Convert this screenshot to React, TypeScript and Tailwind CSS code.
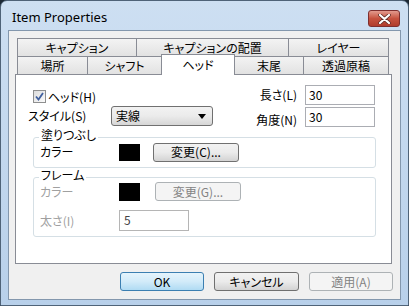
import React from 'react'

function Tab({ label, className }: { label: string; className: string }) {
    return (
        <div className={`h-full flex items-center justify-center border-t border-l border-[#898c95] bg-gradient-to-b from-[#f3f3f3] to-[#e2e2e2] ${className}`}>
            {label}
        </div>
    )
}

function WinButton({ label, className }: { label: string; className: string }) {
    return (
        <div className={`h-[19px] flex items-center justify-center rounded-[3px] border ${className}`}>
            {label}
        </div>
    )
}

export default function App() {
    return (
        <div className="w-[409px] h-[306px] bg-[#1d2935] font-['Noto_Sans_CJK_JP',sans-serif] text-[12px] leading-[12px] text-black [font-feature-settings:'palt']">
            <div className="h-full flex flex-col rounded-t-[7px] border border-[#4f6378] bg-gradient-to-b from-[#cddff2] to-[#b8d0ea]">
                {/* title bar */}
                <div className="h-[29px] flex items-start pl-[11px] pr-[8px]">
                    <span className="mt-[8px] font-['Noto_Sans',sans-serif] text-[13px] leading-[16px] text-black">
                        Item Properties
                    </span>
                    <div className="ml-auto mt-[9px] w-[32px] h-[17px] flex items-center justify-center rounded-[3px] border border-[#7e2f2f] bg-gradient-to-b from-[#e29a8e] via-[#c6523f] to-[#b03c2c]">
                        <svg width="13" height="10" viewBox="0 0 13 10">
                            <path d="M2 1 L11 9 M11 1 L2 9" stroke="#5a2a25" strokeWidth="3.6" strokeLinecap="round" />
                            <path d="M2 1 L11 9 M11 1 L2 9" stroke="#ffffff" strokeWidth="2.2" strokeLinecap="round" />
                        </svg>
                    </div>
                </div>

                {/* client area */}
                <div className="flex-1 mx-[7px] mb-[5px] flex flex-col border border-[#8397ad] bg-[#f0f0f0]">
                    <div className="pt-[7px] pl-[6px] pr-[8px]">
                        {/* tab rows */}
                        <div className="pl-[2px]">
                            <div className="flex h-[18px]">
                                <Tab label="キャプション" className="w-[119px]" />
                                <Tab label="キャプションの配置" className="w-[152px]" />
                                <Tab label="レイヤー" className="w-[101px] border-r" />
                            </div>
                            <div className="flex h-[18px] items-end">
                                <Tab label="場所" className="w-[70px]" />
                                <Tab label="シャフト" className="w-[74px]" />
                                <div className="relative z-10 -mb-px w-[74px] h-[21px] flex justify-center pt-[4px] border-t border-l border-r border-[#898c95] bg-white">
                                    ヘッド
                                </div>
                                <Tab label="末尾" className="w-[68px] border-l-0" />
                                <Tab label="透過原稿" className="w-[86px] border-r" />
                            </div>
                        </div>

                        {/* tab panel */}
                        <div className="h-[190px] border border-[#898c95] bg-white">
                            <div className="flex">
                                <div className="pl-[12px] pt-[15px]">
                                    <div className="ml-[5px] h-[13px] flex items-center gap-[2px]">
                                        <div className="w-[13px] h-[13px] border border-[#8e8f8f] bg-gradient-to-br from-[#dcdcdc] to-[#fbfbfb] flex items-center justify-center">
                                            <svg width="9" height="9" viewBox="0 0 9 9">
                                                <path d="M1 4.5 L3.5 7.5 L8 1" fill="none" stroke="#3f5f9e" strokeWidth="1.8" />
                                            </svg>
                                        </div>
                                        <span>ヘッド(H)</span>
                                    </div>
                                    <div className="mt-[3px] flex items-center">
                                        <span className="w-[83px]">スタイル(S)</span>
                                        <div className="w-[102px] h-[20px] flex items-center justify-between pl-[4px] pr-[6px] rounded-[3px] border border-[#707070] bg-gradient-to-b from-[#f2f2f2] via-[#ebebeb] to-[#d6d6d6]">
                                            <span>実線</span>
                                            <svg width="8" height="5" viewBox="0 0 8 5">
                                                <path d="M0 0 H8 L4 5 Z" fill="#000" />
                                            </svg>
                                        </div>
                                    </div>
                                </div>
                                <div className="ml-auto pt-[10px] pr-[16px] flex flex-col gap-[2px]">
                                    <div className="flex items-center justify-end gap-[8px]">
                                        <span>長さ(L)</span>
                                        <div className="w-[70px] h-[20px] border border-[#abadb3] pl-[3px] pt-[3px]">30</div>
                                    </div>
                                    <div className="flex items-center justify-end gap-[8px]">
                                        <span className="mt-[5px]">角度(N)</span>
                                        <div className="w-[70px] h-[20px] border border-[#abadb3] pl-[3px] pt-[3px]">30</div>
                                    </div>
                                </div>
                            </div>

                            {/* fill group */}
                            <div className="relative ml-[17px] mt-[10px] w-[343px] h-[31px] rounded-[3px] border border-[#d5dfe5] pt-[5px] pl-[6px]">
                                <span className="absolute -top-[9px] left-[5px] bg-white px-[2px]">塗りつぶし</span>
                                <div className="flex items-center h-[18px]">
                                    <span className="w-[79px]">カラー</span>
                                    <div className="w-[21px] h-[17px] bg-black" />
                                    <WinButton label="変更(C)..." className="ml-[13px] w-[86px] border-[#707070] bg-gradient-to-b from-[#f2f2f2] via-[#ebebeb] to-[#d3d3d3]" />
                                </div>
                            </div>

                            {/* frame group */}
                            <div className="relative ml-[17px] mt-[9px] w-[343px] h-[60px] rounded-[3px] border border-[#d5dfe5] pt-[4px] pl-[6px] text-[#a0a0a0]">
                                <span className="absolute -top-[9px] left-[5px] bg-white px-[2px] text-black">フレーム</span>
                                <div className="flex items-center h-[19px]">
                                    <span className="w-[79px]">カラー</span>
                                    <div className="w-[21px] h-[18px] bg-black" />
                                    <WinButton label="変更(G)..." className="ml-[15px] w-[86px] border-[#adb2b5] bg-[#f4f4f4] text-[#838383]" />
                                </div>
                                <div className="mt-[9px] flex items-center h-[21px]">
                                    <span className="w-[79px]">太さ(I)</span>
                                    <div className="w-[70px] h-[21px] border border-[#b5b5b5] pl-[4px] pt-[3px] text-[#444]">5</div>
                                </div>
                            </div>
                        </div>
                    </div>

                    {/* dialog buttons */}
                    <div className="mt-[8px] pr-[7px] flex justify-end gap-[10px]">
                        <WinButton label="OK" className="w-[84px] border-[#3c7fb1] bg-gradient-to-b from-[#e5f4fc] via-[#d2ebf9] to-[#b0dbf3]" />
                        <WinButton label="キャンセル" className="w-[85px] border-[#707070] bg-gradient-to-b from-[#f2f2f2] via-[#ebebeb] to-[#d3d3d3]" />
                        <WinButton label="適用(A)" className="w-[84px] border-[#adb2b5] bg-[#f4f4f4] text-[#838383]" />
                    </div>
                </div>
            </div>
        </div>
    )
}
